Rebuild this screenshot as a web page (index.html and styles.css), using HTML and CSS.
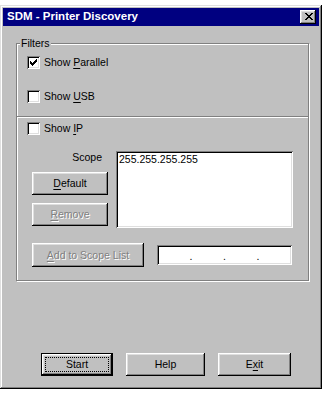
FILE: index.html
```html
<!DOCTYPE html>
<html lang="en">
<head>
<meta charset="utf-8">
<title>SDM - Printer Discovery</title>
<link rel="stylesheet" href="styles.css">
</head>
<body>
<div class="window">
  <div class="titlebar">
    <span class="title">SDM - Printer Discovery</span>
    <button class="close" aria-label="Close">
      <svg width="8" height="7" viewBox="0 0 8 7" shape-rendering="crispEdges"><path fill="#000" d="M0 0h2v1H0zM6 0h2v1H6zM1 1h2v1H1zM5 1h2v1H5zM2 2h4v1H2zM3 3h2v1H3zM2 4h4v1H2zM1 5h2v1H1zM5 5h2v1H5zM0 6h2v1H0zM6 6h2v1H6z"/></svg>
    </button>
  </div>
  <div class="client">
    <div class="group">
      <span class="group-label">Filters</span>
      <div class="check-row">
        <span class="checkbox"><svg width="9" height="9" viewBox="0 0 9 9" shape-rendering="crispEdges"><path fill="#000" d="M1 3h1v3H1zM2 4h1v3H2zM3 5h1v3H3zM4 4h1v3H4zM5 3h1v3H5zM6 2h1v3H6zM7 1h1v3H7z"/></svg></span>
        <span class="check-text">Show <u>P</u>arallel</span>
      </div>
      <div class="check-row row-usb">
        <span class="checkbox"></span>
        <span class="check-text">Show <u>U</u>SB</span>
      </div>
      <div class="separator"></div>
      <div class="check-row row-ip">
        <span class="checkbox"></span>
        <span class="check-text">Show <u>I</u>P</span>
      </div>
      <div class="scope">
        <div class="scope-side">
          <div class="scope-label">Scope</div>
          <button class="btn btn-side"><u>D</u>efault</button>
          <button class="btn btn-side disabled"><u>R</u>emove</button>
        </div>
        <div class="listbox">255.255.255.255</div>
      </div>
      <div class="add-row">
        <button class="btn btn-add disabled"><u>A</u>dd to Scope List</button>
        <div class="ipfield"><span>.</span><span>.</span><span>.</span></div>
      </div>
    </div>
    <div class="footer">
      <button class="btn btn-start default"><span class="focus">Start</span></button>
      <button class="btn btn-help">Help</button>
      <button class="btn btn-exit">E<u>x</u>it</button>
    </div>
  </div>
</div>
</body>
</html>
```
FILE: styles.css
```css
* { box-sizing: border-box; }
html, body { margin: 0; padding: 0; background: #fff; }
body {
  font-family: "Liberation Sans", Arial, sans-serif;
  font-size: 10.5px;
  line-height: 13px;
  color: #000;
}
u { text-decoration: underline; text-underline-offset: 1.5px; }

.window {
  width: 322px;
  height: 384px;
  margin-top: 5px;
  padding: 3px;
  background: #c0c0c0;
  display: flex;
  flex-direction: column;
  box-shadow: inset -1px -1px #000, inset 1px 1px #dfdfdf, inset -2px -2px #808080, inset 2px 2px #fff;
}

.titlebar {
  height: 18px;
  background: #000080;
  color: #fff;
  display: flex;
  align-items: center;
  justify-content: space-between;
  padding: 0 3px 0 4px;
}
.title { font-weight: bold; font-size: 11.5px; margin-top: -1px; }

.btn, .close {
  font: inherit;
  color: #000;
  background: #c0c0c0;
  border: 0;
  padding: 0;
  margin: 0;
  display: flex;
  align-items: center;
  justify-content: center;
  box-shadow: inset -1px -1px #000, inset 1px 1px #fff, inset -2px -2px #808080, inset 2px 2px #dfdfdf;
}
.close { width: 16px; height: 14px; padding: 0 0 0 1px; margin-top: -1px; }

.client { flex: 1; display: flex; flex-direction: column; }

.group {
  position: relative;
  margin: 17px 0 0 13px;
  width: 293px;
  border: 1px solid #808080;
  box-shadow: inset 1px 1px #fff, 1px 1px #fff;
  padding: 12px 0 13px;
}
.group-label {
  position: absolute;
  top: -7px;
  left: 3px;
  padding: 0 1px;
  background: #c0c0c0;
}

.check-row {
  display: flex;
  align-items: center;
  gap: 4px;
  height: 13px;
  margin-left: 10px;
}
.row-usb { margin-top: 21px; }
.row-ip { margin-top: 4px; }
.checkbox {
  width: 13px;
  height: 13px;
  padding: 2px;
  background: #fff;
  display: block;
  box-shadow: inset 1px 1px #808080, inset -1px -1px #fff, inset 2px 2px #000, inset -2px -2px #dfdfdf;
}
.checkbox svg { display: block; }

.separator {
  margin-top: 13px;
  height: 2px;
  border-top: 1px solid #808080;
  border-bottom: 1px solid #fff;
}

.scope {
  display: flex;
  gap: 8px;
  margin: 16px 0 0 15px;
}
.scope-side { width: 76px; display: flex; flex-direction: column; }
.scope-label { text-align: right; padding-right: 6px; height: 13px; margin-bottom: 8px; }
.btn-side { width: 76px; height: 23px; }
.btn-side + .btn-side { margin-top: 8px; }

.listbox {
  width: 177px;
  height: 77px;
  background: #fff;
  padding: 2px 3px;
  box-shadow: inset 1px 1px #808080, inset -1px -1px #fff, inset 2px 2px #000, inset -2px -2px #dfdfdf;
}

.add-row {
  display: flex;
  align-items: center;
  gap: 13px;
  margin: 15px 0 0 15px;
}
.btn-add { width: 112px; height: 24px; }
.ipfield {
  width: 135px;
  height: 20px;
  background: #fff;
  padding: 2px;
  display: flex;
  justify-content: space-evenly;
  align-items: flex-end;
  box-shadow: inset 1px 1px #808080, inset -1px -1px #fff, inset 2px 2px #000, inset -2px -2px #dfdfdf;
}
.ipfield span { line-height: 14px; }

.disabled { color: #808080; text-shadow: 1px 1px 0 #fff; }

.footer {
  margin-top: auto;
  display: flex;
  gap: 13px;
  padding: 0 0 10px 38px;
}
.footer .btn { height: 23px; }
.btn-start { width: 72px; }
.btn-help { width: 79px; }
.btn-exit { width: 73px; }
.default {
  border: 1px solid #000;
  align-items: stretch;
}
.focus {
  flex: 1;
  margin: 3px;
  border: 1px dotted #000;
  display: flex;
  align-items: center;
  justify-content: center;
}
```
